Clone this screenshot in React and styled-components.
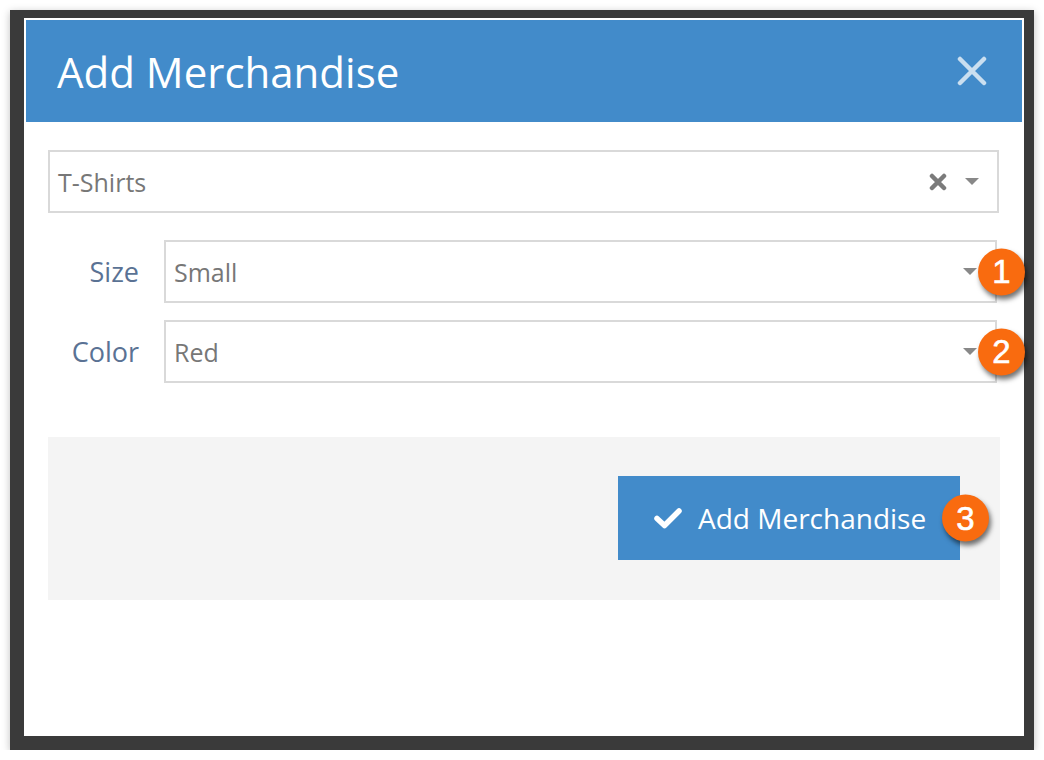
import React from "react";
import styled, { createGlobalStyle } from "styled-components";

const GlobalStyle = createGlobalStyle`
  html, body {
    margin: 0;
    padding: 0;
    background: #fff;
  }
  body {
    font-family: "Open Sans", "Liberation Sans", sans-serif;
  }
`;

const Frame = styled.div`
  margin: 10px 0 0 10px;
  width: 1024px;
  height: 740px;
  box-sizing: border-box;
  padding: 8px 10px 14px 14px;
  background: #3a3a3a;
  box-shadow: 0 2px 8px rgba(0, 0, 0, 0.25);
`;

const Modal = styled.div`
  width: 1000px;
  height: 718px;
  box-sizing: border-box;
  padding: 2px;
  background: #fff;
`;

const Header = styled.div`
  height: 102px;
  display: flex;
  align-items: center;
  justify-content: space-between;
  padding: 0 34px 0 31px;
  background: #428bca;
`;

const Title = styled.h1`
  margin: 0;
  font-size: 42px;
  font-weight: 400;
  color: #fff;
`;

const Close = styled.button`
  border: none;
  background: transparent;
  padding: 0;
  width: 32px;
  height: 32px;
  cursor: pointer;
  display: flex;
  align-items: center;
  justify-content: center;
`;

const Body = styled.div`
  padding: 28px 22px 0 22px;
`;

const Select = styled.div`
  position: relative;
  box-sizing: border-box;
  width: ${(p) => p.$width}px;
  height: 63px;
  border: 2px solid #d9d9d9;
  display: flex;
  align-items: center;
  padding: 0 18px 0 8px;
  font-size: 25px;
  color: #777;
`;

const Value = styled.span`
  flex: 1;
`;

const Icons = styled.div`
  display: flex;
  align-items: center;
  gap: 18px;
`;

const Caret = styled.span`
  width: 0;
  height: 0;
  border-left: 7px solid transparent;
  border-right: 7px solid transparent;
  border-top: 7px solid #888;
`;

const Fields = styled.div`
  margin-top: 27px;
  display: flex;
  flex-direction: column;
  gap: 17px;
`;

const Row = styled.div`
  display: flex;
  align-items: center;
  gap: 25px;
`;

const Label = styled.label`
  width: 91px;
  text-align: right;
  font-size: 27px;
  color: #5a7294;
`;

const Badge = styled.span`
  position: absolute;
  right: ${(p) => p.$right}px;
  top: 50%;
  transform: translateY(-50%);
  width: 47px;
  height: 47px;
  border-radius: 50%;
  background: #f96b0f;
  color: #fff;
  font-family: "Liberation Sans", Arial, sans-serif;
  font-size: 33px;
  -webkit-text-stroke: 0.6px #fff;
  display: flex;
  align-items: center;
  justify-content: center;
  box-shadow: 2px 4px 5px rgba(0, 0, 0, 0.55);
  z-index: 2;
`;

const Footer = styled.div`
  margin-top: 54px;
  width: 952px;
  height: 163px;
  box-sizing: border-box;
  padding: 39px 40px 0 0;
  background: #f4f4f4;
  display: flex;
  justify-content: flex-end;
  align-items: flex-start;
`;

const Button = styled.button`
  position: relative;
  width: 342px;
  height: 84px;
  border: none;
  background: #428bca;
  color: #fff;
  font-family: "Open Sans", "Liberation Sans", sans-serif;
  font-size: 28px;
  display: flex;
  align-items: center;
  gap: 16px;
  padding: 0 0 0 36px;
  cursor: pointer;
`;

const CheckIcon = () => (
  <svg width="28" height="22" viewBox="0 0 28 22">
    <path
      d="M3 11.5 L10.5 18.5 L25 4"
      fill="none"
      stroke="#fff"
      strokeWidth="5.5"
      strokeLinecap="round"
      strokeLinejoin="round"
    />
  </svg>
);

const ClearIcon = () => (
  <svg width="18" height="18" viewBox="0 0 18 18">
    <path d="M3 3 L15 15 M15 3 L3 15" stroke="#7b7b7b" strokeWidth="4.5" strokeLinecap="round" />
  </svg>
);

const App = () => {
  return (
    <>
      <GlobalStyle />
      <Frame>
        <Modal>
          <Header>
            <Title>Add Merchandise</Title>
            <Close aria-label="Close">
              <svg width="30" height="30" viewBox="0 0 30 30">
                <path
                  d="M3 3 L27 27 M27 3 L3 27"
                  stroke="rgba(255,255,255,0.72)"
                  strokeWidth="4.5"
                  strokeLinecap="round"
                />
              </svg>
            </Close>
          </Header>
          <Body>
            <Select $width={951}>
              <Value>T-Shirts</Value>
              <Icons>
                <ClearIcon />
                <Caret />
              </Icons>
            </Select>
            <Fields>
              <Row>
                <Label>Size</Label>
                <Select $width={833}>
                  <Value>Small</Value>
                  <Caret />
                  <Badge $right={-30}>1</Badge>
                </Select>
              </Row>
              <Row>
                <Label>Color</Label>
                <Select $width={833}>
                  <Value>Red</Value>
                  <Caret />
                  <Badge $right={-30}>2</Badge>
                </Select>
              </Row>
            </Fields>
            <Footer>
              <Button>
                <CheckIcon />
                Add Merchandise
                <Badge $right={-29}>3</Badge>
              </Button>
            </Footer>
          </Body>
        </Modal>
      </Frame>
    </>
  );
};

export default App;
